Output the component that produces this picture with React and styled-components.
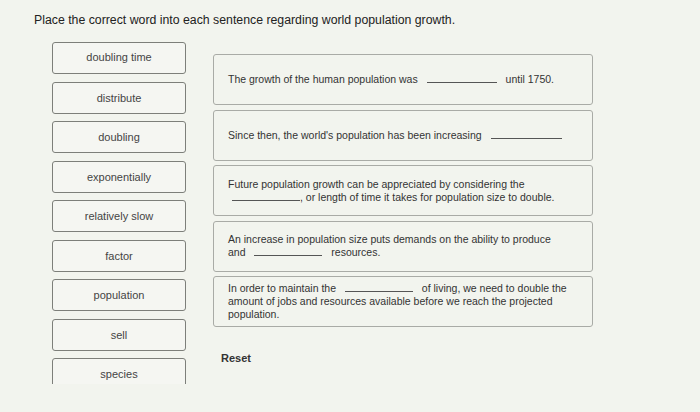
import React from "react";
import styled, { createGlobalStyle } from "styled-components";

const Global = createGlobalStyle`
  html, body { margin: 0; padding: 0; }
  body {
    background: #f2f4ee;
    font-family: "Liberation Sans", Arial, sans-serif;
    color: #333;
  }
`;

const Page = styled.div`
  width: 700px;
  height: 412px;
  overflow: hidden;
  padding: 12px 0 0 34px;
  box-sizing: border-box;
`;

const Title = styled.h1`
  margin: 0;
  font-size: 12.3px;
  font-weight: 400;
  color: #222;
  line-height: 16px;
`;

const Layout = styled.div`
  display: flex;
  align-items: flex-start;
  gap: 27px;
  margin: 14px 0 0 18px;
`;

const WordList = styled.div`
  display: flex;
  flex-direction: column;
  gap: 7.5px;
  width: 134px;
  height: 342px;
  overflow: hidden;
`;

const Word = styled.div`
  height: 32px;
  flex-shrink: 0;
  box-sizing: border-box;
  border: 1px solid #7d7f7a;
  border-radius: 3px;
  display: flex;
  align-items: center;
  justify-content: center;
  font-size: 11px;
  color: #444;
  background: #f5f6f2;
  padding-bottom: ${(p) => (p.$raise ? "2px" : "0")};
`;

const Sentences = styled.div`
  display: flex;
  flex-direction: column;
  gap: 4.5px;
  width: 380px;
  margin-top: 12px;
`;

const Sentence = styled.div`
  min-height: 51px;
  box-sizing: border-box;
  border: 1px solid #a9aba6;
  border-radius: 3px;
  display: flex;
  align-items: center;
  padding: 4px 20px 4px 14px;
  font-size: 10.5px;
  line-height: 13px;
  color: #333;
`;

const Text = styled.div``;

const Blank = styled.span`
  display: inline-block;
  width: ${(p) => p.$w || 68}px;
  border-bottom: 1px solid #555;
  height: 4px;
  margin: 0 ${(p) => p.$gap ?? 6}px 0 ${(p) => p.$left ?? 6}px;
  vertical-align: baseline;
`;

const Reset = styled.button`
  align-self: flex-start;
  margin: 20px 0 0 8px;
  padding: 0;
  border: none;
  background: none;
  font-family: "Liberation Sans", Arial, sans-serif;
  font-size: 11px;
  font-weight: 700;
  color: #333;
`;

const words = [
  "doubling time",
  "distribute",
  "doubling",
  "exponentially",
  "relatively slow",
  "factor",
  "population",
  "sell",
  "species",
];

export default function App() {
  return (
    <>
      <Global />
      <Page>
        <Title>Place the correct word into each sentence regarding world population growth.</Title>
        <Layout>
          <WordList>
            {words.map((w) => (
              <Word key={w} $raise={w === "doubling time"}>{w}</Word>
            ))}
          </WordList>
          <Sentences>
            <Sentence>
              <Text>
                The growth of the human population was <Blank $w={70} /> until 1750.
              </Text>
            </Sentence>
            <Sentence>
              <Text>
                Since then, the world's population has been increasing <Blank $w={71} $gap={0} />
              </Text>
            </Sentence>
            <Sentence>
              <Text>
                Future population growth can be appreciated by considering the
                <br />
                <Blank $w={68} $left={4} $gap={0} />, or length of time it takes for population size to double.
              </Text>
            </Sentence>
            <Sentence>
              <Text>
                An increase in population size puts demands on the ability to produce
                <br />
                and <Blank $w={68} /> resources.
              </Text>
            </Sentence>
            <Sentence>
              <Text>
                In order to maintain the <Blank $w={68} /> of living, we need to double the amount of jobs and resources available before we reach the projected population.
              </Text>
            </Sentence>
            <Reset>Reset</Reset>
          </Sentences>
        </Layout>
      </Page>
    </>
  );
}
